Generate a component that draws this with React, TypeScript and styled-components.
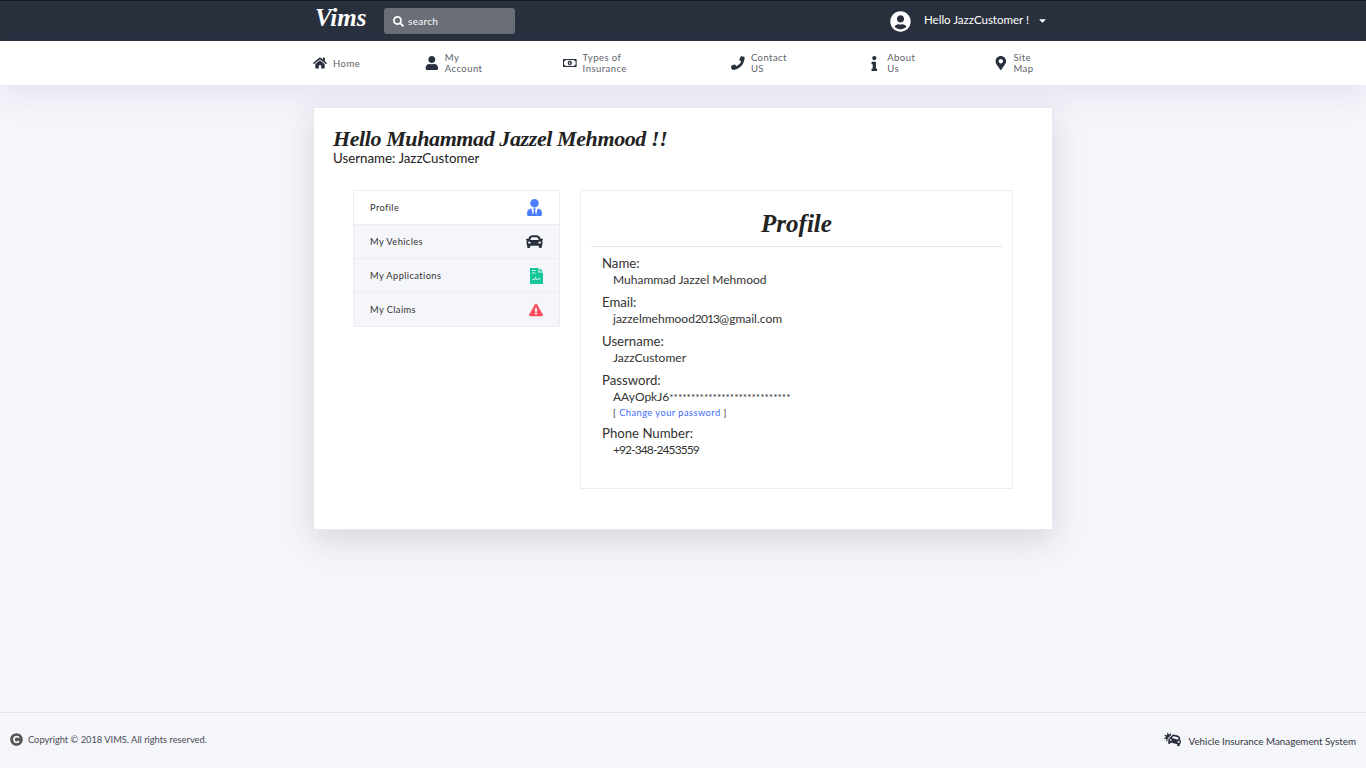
import React from 'react'
import styled, { createGlobalStyle } from 'styled-components'
import {
  FaCar,
  FaCarCrash,
  FaCaretDown,
  FaCopyright,
  FaExclamationTriangle,
  FaHome,
  FaInfo,
  FaMapMarkerAlt,
  FaPhone,
  FaRegMoneyBillAlt,
  FaSearch,
  FaUser,
  FaUserCircle,
  FaUserTie,
} from 'react-icons/fa'

const GlobalStyle = createGlobalStyle`
  html, body {
    margin: 0;
    padding: 0;
  }

  body {
    background: #f5f6fa;
    font-family: 'Lato', 'Liberation Sans', sans-serif;
    color: #29303d;
  }
`

const FileIcon = () => (
  <svg width="13" height="16" viewBox="0 0 13 16" fill="#15c79a">
    <path d="M0 0h8.4v4.6H13V16H0z" />
    <path d="M9.4 0L13 3.6H9.4z" />
    <path d="M2 2.5h3.5M2 5h3.5" fill="none" stroke="#fff" strokeWidth="0.8" />
    <path d="M2.5 11.5h2l.9-2 1 2.4.9-1h3.2" fill="none" stroke="#fff" strokeWidth="0.8" />
  </svg>
)

const navItems = [
  { label: 'Home', icon: <FaHome size={14} /> },
  { label: 'My Account', icon: <FaUser size={14} /> },
  { label: 'Types of Insurance', icon: <FaRegMoneyBillAlt size={14} /> },
  { label: 'Contact US', icon: <FaPhone size={14} /> },
  { label: 'About Us', icon: <FaInfo size={15} /> },
  { label: 'Site Map', icon: <FaMapMarkerAlt size={14} /> },
]

const menuItems = [
  { label: 'Profile', icon: <FaUserTie size={17} color="#4c7cff" />, active: true },
  { label: 'My Vehicles', icon: <FaCar size={17} color="#29303d" /> },
  { label: 'My Applications', icon: <FileIcon /> },
  { label: 'My Claims', icon: <FaExclamationTriangle size={14} color="#ff4d5e" /> },
]

const App = () => {
  return (
    <>
      <GlobalStyle />
      <Page>
        <TopBar>
          <Inner>
            <Logo>Vims</Logo>
            <SearchBox>
              <FaSearch size={11} />
              <span>search</span>
            </SearchBox>
            <UserMenu>
              <FaUserCircle size={21} />
              <UserName>Hello JazzCustomer !</UserName>
              <CaretWrap>
                <FaCaretDown size={11} />
              </CaretWrap>
            </UserMenu>
          </Inner>
        </TopBar>

        <NavBar>
          <NavInner>
            {navItems.map((item) => (
              <NavItem key={item.label}>
                {item.icon}
                <span>{item.label}</span>
              </NavItem>
            ))}
          </NavInner>
        </NavBar>

        <Main>
          <Card>
            <Greeting>Hello Muhammad Jazzel Mehmood !!</Greeting>
            <SubGreeting>Username: JazzCustomer</SubGreeting>

            <Columns>
              <SideMenu>
                {menuItems.map((item) => (
                  <MenuRow key={item.label} $active={item.active}>
                    <span>{item.label}</span>
                    <MenuIcon>{item.icon}</MenuIcon>
                  </MenuRow>
                ))}
              </SideMenu>

              <ProfilePanel>
                <ProfileTitle>Profile</ProfileTitle>
                <Fields>
                  <Field>
                    <FieldLabel>Name:</FieldLabel>
                    <FieldValue>Muhammad Jazzel Mehmood</FieldValue>
                  </Field>
                  <Field>
                    <FieldLabel>Email:</FieldLabel>
                    <FieldValue>
                      jazzelmehmood<Digits>2013</Digits>@gmail.com
                    </FieldValue>
                  </Field>
                  <Field>
                    <FieldLabel>Username:</FieldLabel>
                    <FieldValue>JazzCustomer</FieldValue>
                  </Field>
                  <Field>
                    <FieldLabel>Password:</FieldLabel>
                    <FieldValue>
                      AAyOpkJ6<Stars>****************************</Stars>
                    </FieldValue>
                    <ChangeLine>
                      [ <a href="#change">Change your password</a> ]
                    </ChangeLine>
                  </Field>
                  <Field>
                    <FieldLabel>Phone Number:</FieldLabel>
                    <FieldValue>
                      <Digits>+92-348-2453559</Digits>
                    </FieldValue>
                  </Field>
                </Fields>
              </ProfilePanel>
            </Columns>
          </Card>
        </Main>

        <Footer>
          <FooterLeft>
            <FaCopyright size={13} color="#555" />
            <span>Copyright © 2018 VIMS. All rights reserved.</span>
          </FooterLeft>
          <FooterRight>
            <FaCarCrash size={17} color="#29303d" />
            <span>Vehicle Insurance Management System</span>
          </FooterRight>
        </Footer>
      </Page>
    </>
  )
}

const Page = styled.div`
  display: flex;
  flex-direction: column;
  min-height: 768px;
`

const TopBar = styled.header`
  height: 40px;
  border-top: 1px solid #14181f;
  background: #29303d;
  color: #fff;
`

const Inner = styled.div`
  display: flex;
  align-items: center;
  width: 740px;
  height: 100%;
  margin: 0 auto;
`

const Logo = styled.div`
  box-sizing: border-box;
  width: 71px;
  margin-top: -6px;
  padding-left: 2px;
  font-family: 'Liberation Serif', serif;
  font-size: 25px;
  font-style: italic;
  font-weight: 700;
`

const SearchBox = styled.div`
  display: flex;
  align-items: center;
  gap: 4px;
  box-sizing: border-box;
  width: 131px;
  height: 26px;
  padding-left: 9px;
  border-radius: 3px;
  background: #696e77;
  font-size: 10px;
  letter-spacing: 0.3px;
`

const UserMenu = styled.div`
  display: flex;
  align-items: center;
  margin-left: 375px;
`

const UserName = styled.span`
  margin: 0 8px 3px 13px;
  font-size: 11.5px;
`

const CaretWrap = styled.span`
  display: flex;
  margin-bottom: 2px;
`

const NavBar = styled.nav`
  height: 44px;
  background: #fff;
  box-shadow: 0 10px 30px rgba(90, 90, 190, 0.12);
`

const NavInner = styled.div`
  display: flex;
  align-items: center;
  gap: 65px;
  width: 740px;
  height: 100%;
  margin: 0 auto;
`

const NavItem = styled.div`
  display: flex;
  align-items: center;
  gap: 6px;
  color: #29303d;

  svg {
    width: auto;
  }

  span {
    color: #5e6269;
    font-size: 9.5px;
    letter-spacing: 0.45px;
  }
`

const Main = styled.main`
  flex: 1;
  padding-top: 22px;
`

const Card = styled.section`
  box-sizing: border-box;
  width: 740px;
  height: 423px;
  margin: 0 auto;
  padding: 19px 19px 0;
  border: 1px solid #e8e8ee;
  background: #fff;
  box-shadow: 0 10px 30px rgba(40, 40, 60, 0.15);
`

const Greeting = styled.h1`
  margin: 0;
  color: #222;
  font-family: 'Liberation Serif', serif;
  font-size: 22px;
  font-style: italic;
  font-weight: 700;
  line-height: 24px;
  letter-spacing: -0.4px;
`

const SubGreeting = styled.div`
  color: #222;
  font-size: 13.3px;
  line-height: 15px;
`

const Columns = styled.div`
  display: flex;
  align-items: flex-start;
  gap: 20px;
  margin: 24px 20px 0;
`

const SideMenu = styled.div`
  overflow: hidden;
  flex: none;
  box-sizing: border-box;
  width: 207px;
  border: 1px solid #ececf2;
  border-radius: 2px;
`

const MenuRow = styled.div<{ $active?: boolean }>`
  display: flex;
  align-items: center;
  justify-content: space-between;
  box-sizing: border-box;
  height: 34px;
  padding: 0 16px;
  background: ${({ $active }) => ($active ? '#fff' : '#f5f6fa')};
  color: #333;
  font-size: 9.3px;
  letter-spacing: 0.4px;

  &:first-child {
    height: 33px;
  }

  & + & {
    border-top: 1px solid #ececf2;
  }

  span:first-child {
    padding-bottom: 1px;
  }
`

const MenuIcon = styled.span`
  display: flex;

  svg {
    width: auto;
  }
`

const ProfilePanel = styled.div`
  box-sizing: border-box;
  width: 433px;
  height: 299px;
  padding: 0 10px;
  border: 1px solid #ececf2;
`

const ProfileTitle = styled.h2`
  margin: 0;
  padding: 16px 0 6px;
  border-bottom: 1px solid #e3e4e8;
  color: #222;
  font-family: 'Liberation Serif', serif;
  font-size: 25px;
  font-style: italic;
  font-weight: 700;
  line-height: 33px;
  text-align: center;
`

const Fields = styled.div`
  display: flex;
  flex-direction: column;
  gap: 5px;
  padding: 8px 11px 0;
`

const Field = styled.div`
  display: flex;
  flex-direction: column;
`

const FieldLabel = styled.div`
  color: #333;
  font-size: 13.2px;
  line-height: 16px;
`

const FieldValue = styled.div`
  padding-left: 11px;
  color: #333;
  font-size: 12px;
  line-height: 18px;
`

const Digits = styled.span`
  letter-spacing: -0.9px;
`

const Stars = styled.span`
  font-size: 10.2px;
`

const ChangeLine = styled.div`
  padding-left: 11px;
  color: #333;
  font-size: 9.3px;
  line-height: 14px;
  letter-spacing: 0.45px;

  a {
    color: #3b6cf6;
    text-decoration: none;
  }
`

const Footer = styled.footer`
  display: flex;
  align-items: center;
  justify-content: space-between;
  box-sizing: border-box;
  height: 56px;
  padding: 0 10px 3px;
  border-top: 1px solid #e3e4e8;
  color: #4a4a55;
`

const FooterLeft = styled.div`
  display: flex;
  align-items: center;
  gap: 5px;
  font-size: 9.3px;
`

const FooterRight = styled.div`
  display: flex;
  align-items: center;
  gap: 8px;
  color: #33363f;
  font-size: 9.8px;

  span {
    padding-top: 3px;
  }
`

export default App
